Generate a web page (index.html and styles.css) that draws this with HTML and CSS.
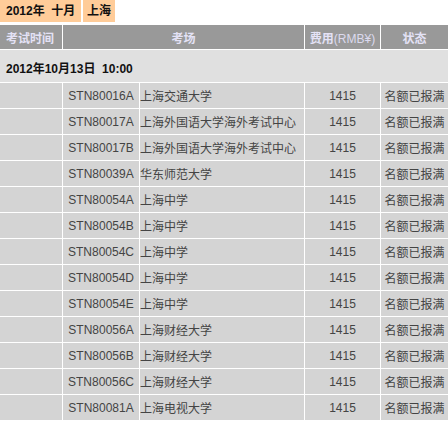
FILE: index.html
```html
<!DOCTYPE html>
<html lang="zh-CN">
<head>
<meta charset="utf-8">
<title>考场</title>
<link rel="stylesheet" href="styles.css">
</head>
<body>
<div class="title">
  <div class="title-cell wide">2012年&nbsp;&nbsp;十月</div>
  <div class="title-cell">上海</div>
</div>
<table class="grid">
  <colgroup>
    <col class="c1"><col class="c2"><col class="c3"><col class="c4"><col class="c5">
  </colgroup>
  <thead>
    <tr class="head">
      <th>考试时间</th>
      <th colspan="2">考场</th>
      <th>费用<span class="unit">(RMB¥)</span></th>
      <th>状态</th>
    </tr>
  </thead>
  <tbody>
    <tr class="date"><td colspan="5">2012年10月13日&nbsp;&nbsp;10:00</td></tr>
    <tr><td></td><td class="code">STN80016A</td><td class="name">上海交通大学</td><td class="fee">1415</td><td class="state">名额已报满</td></tr>
    <tr><td></td><td class="code">STN80017A</td><td class="name">上海外国语大学海外考试中心</td><td class="fee">1415</td><td class="state">名额已报满</td></tr>
    <tr><td></td><td class="code">STN80017B</td><td class="name">上海外国语大学海外考试中心</td><td class="fee">1415</td><td class="state">名额已报满</td></tr>
    <tr><td></td><td class="code">STN80039A</td><td class="name">华东师范大学</td><td class="fee">1415</td><td class="state">名额已报满</td></tr>
    <tr><td></td><td class="code">STN80054A</td><td class="name">上海中学</td><td class="fee">1415</td><td class="state">名额已报满</td></tr>
    <tr><td></td><td class="code">STN80054B</td><td class="name">上海中学</td><td class="fee">1415</td><td class="state">名额已报满</td></tr>
    <tr><td></td><td class="code">STN80054C</td><td class="name">上海中学</td><td class="fee">1415</td><td class="state">名额已报满</td></tr>
    <tr><td></td><td class="code">STN80054D</td><td class="name">上海中学</td><td class="fee">1415</td><td class="state">名额已报满</td></tr>
    <tr><td></td><td class="code">STN80054E</td><td class="name">上海中学</td><td class="fee">1415</td><td class="state">名额已报满</td></tr>
    <tr><td></td><td class="code">STN80056A</td><td class="name">上海财经大学</td><td class="fee">1415</td><td class="state">名额已报满</td></tr>
    <tr><td></td><td class="code">STN80056B</td><td class="name">上海财经大学</td><td class="fee">1415</td><td class="state">名额已报满</td></tr>
    <tr><td></td><td class="code">STN80056C</td><td class="name">上海财经大学</td><td class="fee">1415</td><td class="state">名额已报满</td></tr>
    <tr><td></td><td class="code">STN80081A</td><td class="name">上海电视大学</td><td class="fee">1415</td><td class="state">名额已报满</td></tr>
  </tbody>
</table>
</body>
</html>
```
FILE: styles.css
```css
html, body {
  margin: 0;
  padding: 0;
  background: #ffffff;
}
body {
  font-family: "Liberation Sans", Arial, "Noto Sans CJK SC", sans-serif;
  font-size: 12px;
  color: #444444;
  width: 448px;
  overflow: hidden;
}
.title {
  display: flex;
  gap: 2px;
  height: 22px;
}
.title-cell {
  background: #ffcc99;
  color: #111111;
  font-weight: bold;
  font-size: 12px;
  line-height: 22px;
  padding: 0 4px;
  width: 24px;
  white-space: nowrap;
}
.title-cell.wide {
  width: auto;
  padding: 0 4px 0 6px;
  flex: 0 0 71px;
}
.grid {
  border-collapse: separate;
  border-spacing: 1px;
  table-layout: fixed;
  width: 450px;
  margin: 2px 0 0 -1px;
}
.c1 { width: 62px; }
.c2 { width: 76px; }
.c3 { width: 164px; }
.c4 { width: 75px; }
.c5 { width: 67px; }
.grid th, .grid td {
  padding: 0;
  white-space: nowrap;
  overflow: hidden;
  box-sizing: border-box;
}
.head th {
  background: #999999;
  color: #e4e2f6;
  font-weight: bold;
  height: 24px;
  text-align: center;
}
.head th:first-child {
  text-align: left;
  padding-left: 6px;
}
.unit {
  font-weight: normal;
  font-size: 12px;
  color: #dcdaee;
}
.date td {
  background: #e0e0e0;
  color: #111111;
  font-weight: bold;
  height: 32px;
  padding: 3px 0 0 6px;
}
tbody tr td {
  background: #d4d4d4;
  height: 25px;
}
.code, .fee, .state {
  text-align: center;
}
.name {
  padding-left: 3px;
}
```
